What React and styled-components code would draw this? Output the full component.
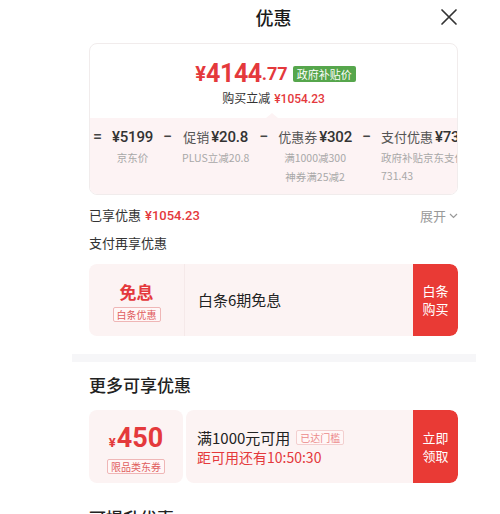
import React from "react";
import styled, { createGlobalStyle } from "styled-components";

const GlobalStyle = createGlobalStyle`
  body {
    margin: 0;
    background: #fff;
    font-family: "Noto Sans CJK SC", "Noto Sans", sans-serif;
    color: #333;
  }
`;

const Sheet = styled.div`
  width: 404px;
  margin-left: 72px;
  height: 514px;
  overflow: hidden;
  background: #fff;
`;

const Inner = styled.div`
  padding: 0 18px 0 17px;
`;

const Header = styled.header`
  height: 34px;
  display: grid;
  grid-template-columns: 1fr auto 1fr;
  align-items: center;
  margin-bottom: 9px;
`;

const Title = styled.h1`
  grid-column: 2;
  margin: 0;
  font-size: 18px;
  font-weight: 500;
  color: #1a1a1a;
`;

const Close = styled.button`
  justify-self: end;
  width: 20px;
  height: 20px;
  padding: 0;
  margin-right: -1px;
  border: none;
  background: transparent;
  display: flex;
  align-items: center;
  justify-content: center;
`;

const PriceCard = styled.section`
  border: 1px solid #f1ecec;
  border-radius: 8px;
  overflow: hidden;
`;

const PriceTop = styled.div`
  height: 74px;
  padding-top: 18px;
  box-sizing: border-box;
  text-align: center;
`;

const PriceLine = styled.div`
  display: flex;
  justify-content: center;
  align-items: center;
  height: 24px;
  padding-left: 4px;
`;

const Price = styled.span`
  font-family: Roboto, "Noto Sans", sans-serif;
  font-weight: 700;
  color: #e4393c;
  font-size: ${(p) => p.$size}px;
  line-height: 24px;
  letter-spacing: ${(p) => (p.$tight ? "-0.4px" : "0")};
`;

const Badge = styled.span`
  margin-left: 5px;
  background: #56a64c;
  color: #fff;
  font-size: 11px;
  line-height: 16px;
  padding: 0 4px;
  border-radius: 2px;
`;

const SaveLine = styled.div`
  margin-top: 4px;
  font-size: 12px;
  line-height: 16px;
  color: #333;
`;

const Red = styled.span`
  color: #e4393c;
  font-family: Roboto, "Noto Sans", sans-serif;
  font-weight: ${(p) => (p.$bold ? 500 : 400)};
  margin-left: 4px;
`;

const Breakdown = styled.div`
  position: relative;
  height: 76px;
  background: #fdf3f4;
  padding: 8px 0 0 2px;
  box-sizing: border-box;

  &::before {
    content: "";
    position: absolute;
    top: -5px;
    left: 50%;
    margin-left: -8px;
    border-left: 6px solid transparent;
    border-right: 6px solid transparent;
    border-bottom: 5px solid #fdf3f4;
  }
`;

const Row = styled.div`
  display: flex;
  gap: 9px;
  white-space: nowrap;
  overflow: hidden;
`;

const Op = styled.span`
  font-family: Roboto, "Noto Sans", sans-serif;
  font-size: 16px;
  font-weight: 500;
  line-height: 22px;
  color: #444;
  padding: 0 1px;
`;

const Item = styled.div`
  display: flex;
  flex-direction: column;
  align-items: ${(p) => (p.$left ? "flex-start" : "center")};
  flex-shrink: 0;
`;

const Main = styled.div`
  font-size: 13px;
  line-height: 22px;
  color: #555;
`;

const Amount = styled.span`
  font-family: Roboto, "Noto Sans", sans-serif;
  font-size: 15px;
  font-weight: 500;
  color: #333;
  letter-spacing: -0.2px;
  margin-left: ${(p) => (p.$gap ? "2px" : "0")};
`;

const Sub = styled.div`
  margin-top: 1px;
  font-size: 10.5px;
  line-height: 18px;
  color: #a8a8a8;
  text-align: ${(p) => (p.$left ? "left" : "center")};
  white-space: ${(p) => (p.$wrap ? "normal" : "nowrap")};
  width: ${(p) => (p.$wrap ? "86px" : "auto")};
  word-break: break-all;
`;

const InfoRow = styled.div`
  display: flex;
  justify-content: space-between;
  align-items: center;
  margin-top: ${(p) => p.$top}px;
  font-size: 13px;
  line-height: 20px;
  color: #333;
`;

const Toggle = styled.span`
  display: flex;
  align-items: center;
  gap: 3px;
  color: #999;
`;

const Offer = styled.div`
  display: flex;
  height: ${(p) => p.$height}px;
  margin-top: ${(p) => p.$top}px;
  gap: ${(p) => (p.$ticket ? "3px" : "0")};
`;

const OfferLeft = styled.div`
  width: ${(p) => (p.$ticket ? "94px" : "96px")};
  background: #fcf3f3;
  border-radius: ${(p) => (p.$ticket ? "8px" : "8px 0 0 8px")};
  border-right: ${(p) => (p.$ticket ? "none" : "1px solid #f5e9e9")};
  display: flex;
  flex-direction: column;
  align-items: center;
  justify-content: center;
  gap: ${(p) => (p.$ticket ? "2px" : "5px")};
  padding-top: 4px;
  box-sizing: border-box;
`;

const OfferBody = styled.div`
  flex: 1;
  display: flex;
  background: #fcf3f3;
  border-radius: ${(p) => (p.$ticket ? "8px" : "0 8px 8px 0")};
  overflow: hidden;
`;

const OfferText = styled.div`
  flex: 1;
  display: flex;
  flex-direction: column;
  justify-content: center;
  padding-left: ${(p) => (p.$ticket ? "11px" : "13px")};
`;

const OfferTitle = styled.div`
  display: flex;
  align-items: center;
  gap: 6px;
  font-size: 15px;
  line-height: 20px;
  color: #222;
`;

const Countdown = styled.div`
  font-size: 14px;
  line-height: 18px;
  color: #e4393c;
`;

const Action = styled.div`
  width: 45px;
  background: #e93a35;
  color: #fff;
  font-size: 13px;
  line-height: 18px;
  display: flex;
  align-items: center;
  justify-content: center;
  text-align: center;
  border-radius: 0 8px 8px 0;
`;

const FreeLabel = styled.div`
  font-size: 17px;
  font-weight: 700;
  line-height: 20px;
  color: #e4393c;
`;

const CouponValue = styled.div`
  color: #e4393c;
  font-family: Roboto, "Noto Sans", sans-serif;
  font-weight: 700;
  line-height: 28px;
  font-size: 27px;

  small {
    font-size: 13px;
    margin-right: 1px;
  }
`;

const Tag = styled.span`
  font-size: 10px;
  line-height: 13px;
  padding: 0 3px;
  border: 1px solid ${(p) => (p.$muted ? "#f3cfcf" : "#efb6b6")};
  border-radius: 2px;
  color: ${(p) => (p.$muted ? "#ec8a8a" : "#e05d5d")};
  background: #fff7f7;
`;

const Divider = styled.div`
  height: 8px;
  background: #f6f6f8;
  margin-top: 18px;
`;

const SectionTitle = styled.h2`
  margin: ${(p) => p.$top}px 0 0;
  font-size: 17px;
  font-weight: 500;
  line-height: 22px;
  color: #222;
`;

const CloseIcon = () => (
  <svg width="18" height="18" viewBox="0 0 18 18">
    <path d="M2 2L16 16M16 2L2 16" stroke="#333" strokeWidth="1.7" strokeLinecap="round" />
  </svg>
);

const Chevron = () => (
  <svg width="9" height="6" viewBox="0 0 9 6">
    <path d="M1 1l3.5 3.5L8 1" stroke="#999" strokeWidth="1.2" fill="none" />
  </svg>
);

const parts = [
  { label: "", amount: "¥5199", sub: ["京东价"] },
  { label: "促销", amount: "¥20.8", sub: ["PLUS立减20.8"] },
  { label: "优惠券", amount: "¥302", sub: ["满1000减300", "神券满25减2"] },
  { label: "支付优惠", amount: "¥731.43", sub: ["政府补贴京东支付731.43"], wrap: true },
];

export default function App() {
  return (
    <>
      <GlobalStyle />
      <Sheet>
        <Inner>
          <Header>
            <Title>优惠</Title>
            <Close aria-label="关闭">
              <CloseIcon />
            </Close>
          </Header>

          <PriceCard>
            <PriceTop>
              <PriceLine>
                <Price $size={20}>¥</Price>
                <Price $size={25} $tight>4144</Price>
                <Price $size={18}>.77</Price>
                <Badge>政府补贴价</Badge>
              </PriceLine>
              <SaveLine>
                购买立减<Red $bold>¥1054.23</Red>
              </SaveLine>
            </PriceTop>
            <Breakdown>
              <Row>
                <Op>=</Op>
                {parts.map((p, i) => (
                  <React.Fragment key={p.amount}>
                    {i > 0 && <Op>−</Op>}
                    <Item $left={p.wrap}>
                      <Main>
                        {p.label}
                        <Amount $gap={!!p.label}>{p.amount}</Amount>
                      </Main>
                      {p.sub.map((s) => (
                        <Sub key={s} $left={p.wrap} $wrap={p.wrap}>
                          {s}
                        </Sub>
                      ))}
                    </Item>
                  </React.Fragment>
                ))}
              </Row>
            </Breakdown>
          </PriceCard>

          <InfoRow $top={10}>
            <span>
              已享优惠<Red $bold>¥1054.23</Red>
            </span>
            <Toggle>
              展开 <Chevron />
            </Toggle>
          </InfoRow>
          <InfoRow $top={7}>支付再享优惠</InfoRow>

          <Offer $height={72} $top={11}>
            <OfferLeft>
              <FreeLabel>免息</FreeLabel>
              <Tag>白条优惠</Tag>
            </OfferLeft>
            <OfferBody>
              <OfferText>
                <OfferTitle>白条6期免息</OfferTitle>
              </OfferText>
              <Action>
                白条
                <br />
                购买
              </Action>
            </OfferBody>
          </Offer>
        </Inner>

        <Divider />

        <Inner>
          <SectionTitle $top={12}>更多可享优惠</SectionTitle>
          <Offer $height={73} $top={14} $ticket>
            <OfferLeft $ticket>
              <CouponValue>
                <small>¥</small>450
              </CouponValue>
              <Tag>限品类东券</Tag>
            </OfferLeft>
            <OfferBody $ticket>
              <OfferText $ticket>
                <OfferTitle>
                  满1000元可用<Tag $muted>已达门槛</Tag>
                </OfferTitle>
                <Countdown>距可用还有10:50:30</Countdown>
              </OfferText>
              <Action>
                立即
                <br />
                领取
              </Action>
            </OfferBody>
          </Offer>
          <SectionTitle $top={24}>可提升优惠</SectionTitle>
        </Inner>
      </Sheet>
    </>
  );
}
